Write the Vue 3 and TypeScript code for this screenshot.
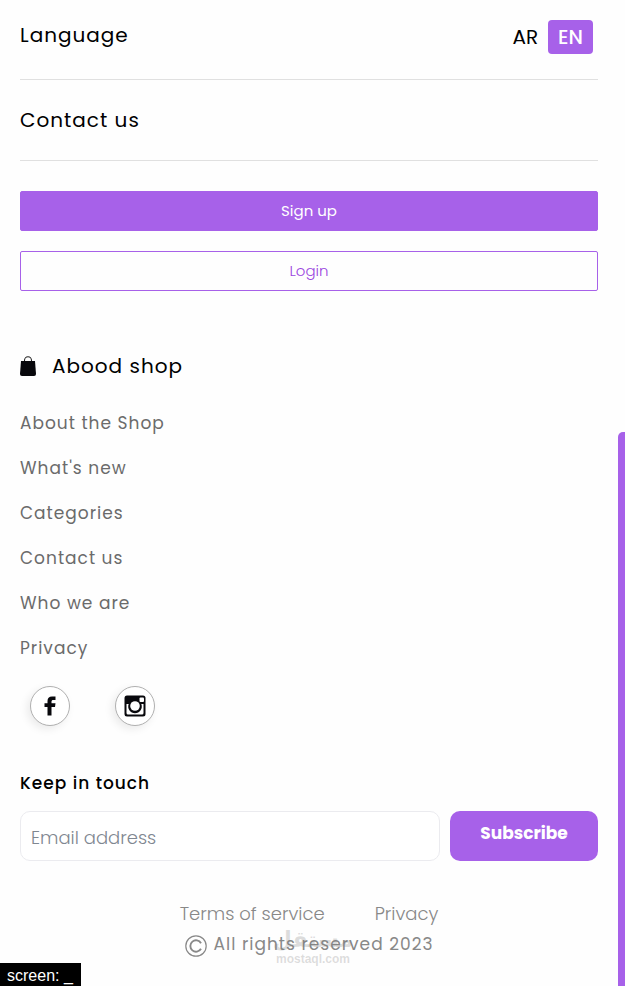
<script setup lang="ts">
import { ref } from 'vue'

type Lang = 'AR' | 'EN'

const languages: Lang[] = ['AR', 'EN']
const current = ref<Lang>('EN')
const email = ref('')
const links: string[] = ['About the Shop', "What's new", 'Categories', 'Contact us', 'Who we are', 'Privacy']
</script>

<template>
  <div class="page">
    <main class="content">
      <section class="row">
        <span class="label">Language</span>
        <div class="switch">
          <button
            v-for="lang in languages"
            :key="lang"
            type="button"
            class="lang"
            :class="{ active: lang === current }"
            @click="current = lang"
          >{{ lang }}</button>
        </div>
      </section>
      <section class="row">
        <a class="label" href="#contact">Contact us</a>
      </section>

      <div class="actions">
        <button type="button" class="action filled">Sign up</button>
        <button type="button" class="action outline">Login</button>
      </div>

      <footer>
        <h2 class="brand">
          <svg class="bag" viewBox="0 0 16 20" aria-hidden="true">
            <path d="M4.5 7V4.5a3.5 3.8 0 0 1 7 0V7" fill="none" stroke="#222" stroke-width="1.1" />
            <path d="M1 5h14l1 13q0 2-2 2H2q-2 0-2-2z" fill="#08080c" />
          </svg>
          <span>Abood shop</span>
        </h2>
        <nav class="links">
          <a v-for="link in links" :key="link" href="#">{{ link }}</a>
        </nav>
        <div class="social">
          <a href="#" aria-label="Facebook">
            <svg viewBox="0 0 24 24">
              <path d="M9.500 21.500v-8.500H6.500V9.300h3V7.200C9.500 4 11 2.500 14 2.500h3.500v3.600h-2.200c-1.300 0-1.800.5-1.800 1.700v1.500h4L17 13h-3.500v8.500z" fill="#08080c" />
            </svg>
          </a>
          <a href="#" aria-label="Instagram">
            <svg viewBox="0 0 24 24">
              <path d="M4 1.500h16q2.500 0 2.500 2.500v16q0 2.500-2.500 2.500H4q-2.500 0-2.500-2.500V4q0-2.500 2.500-2.500z" fill="#08080c" />
              <path d="M3.500 10h2.200a6.800 6.800 0 1 0 12.600 0h2.200v9q0 1.500-1.500 1.500H5q-1.500 0-1.500-1.500z" fill="#fff" />
              <circle cx="12" cy="12" r="4.800" fill="#fff" />
              <rect x="16.500" y="3.500" width="4.500" height="4.500" rx="1" fill="#fff" />
            </svg>
          </a>
        </div>

        <form class="newsletter" @submit.prevent>
          <label for="email">Keep in touch</label>
          <div class="fields">
            <input id="email" v-model="email" type="email" placeholder="Email address" />
            <button type="submit">Subscribe</button>
          </div>
        </form>

        <div class="legal">
          <div class="terms">
            <a href="#">Terms of service</a>
            <a href="#">Privacy</a>
          </div>
          <p class="rights">
            <svg viewBox="0 0 22 22" aria-hidden="true" fill="none" stroke="#888">
              <circle cx="11" cy="11" r="10.200" stroke-width="1.200" />
              <path d="M16 8.200a5.700 5.700 0 1 0 0 5.600" stroke-width="1.900" />
            </svg>
            <span>All rights reserved 2023</span>
          </p>
          <div class="mark">
            <span class="mark-name" lang="ar">مستقل</span>
            <span class="mark-site">mostaql.com</span>
          </div>
        </div>
      </footer>
    </main>
    <div class="rail"><div class="thumb"></div></div>
    <div class="status">screen: _</div>
  </div>
</template>

<style>
body {
  margin: 0;
  background: #fefefe;
}
</style>

<style scoped>
.page {
  box-sizing: border-box;
  display: flex;
  min-height: 100vh;
  color: #000;
  font-family: Poppins, Inter, "Liberation Sans", sans-serif;
}
.page *, .page *::before { box-sizing: border-box; }
button, input { font-family: inherit; margin: 0; }
button { cursor: pointer; }
a { color: inherit; text-decoration: none; }

.content {
  flex: 1;
  min-width: 0;
  padding: 0 20px 24px;
}
.row {
  display: flex;
  justify-content: space-between;
  align-items: flex-start;
  height: 81px;
  padding: 25px 5px 0 0;
  border-bottom: 1px solid #e0e0e0;
}
.row:first-child {
  height: 80px;
  padding-top: 20px;
}
.label {
  font-size: 20px;
  line-height: 30px;
  letter-spacing: 1px;
}
.switch { display: flex; }
.lang {
  height: 34px;
  padding: 0 10px;
  border: 0;
  border-radius: 4px;
  background: transparent;
  color: #000;
  font-size: 20px;
  font-weight: 400;
}
.lang.active {
  background: #a761e9;
  color: #fff;
  font-weight: 500;
}

.actions {
  display: flex;
  flex-direction: column;
  gap: 20px;
  padding-top: 30px;
}
.action {
  height: 40px;
  padding: 0 0 2px;
  border: 1px solid #a761e9;
  border-radius: 2px;
  font-size: 15px;
}
.filled { background: #a761e9; color: #fff; }
.outline { background: transparent; color: #9a45e0; font-weight: 300; }

.brand {
  display: flex;
  align-items: center;
  gap: 16px;
  margin: 60px 0 0;
  font-size: 20px;
  font-weight: 400;
  line-height: 30px;
  letter-spacing: 1px;
}
.bag { width: 16px; height: 20px; }
.links {
  display: flex;
  flex-direction: column;
  align-items: flex-start;
  gap: 15px;
  padding-top: 27px;
  color: #6b6b6b;
  font-size: 17px;
  line-height: 30px;
  letter-spacing: 1px;
}
.social {
  display: flex;
  gap: 45px;
  padding: 23px 10px 0;
}
.social a {
  display: flex;
  align-items: center;
  justify-content: center;
  width: 40px;
  height: 40px;
  border: 1px solid #b0b0b0;
  border-radius: 50%;
  background: #fff;
  box-shadow: -3px 3px 8px rgba(0, 0, 0, 0.08);
}
.social svg { width: 24px; height: 24px; }

.newsletter { padding-top: 42px; }
.newsletter label {
  display: block;
  font-size: 17px;
  font-weight: 500;
  line-height: 30px;
  letter-spacing: 1px;
}
.fields {
  display: flex;
  gap: 10px;
  padding-top: 13px;
}
.fields input {
  flex: 1;
  min-width: 0;
  height: 50px;
  padding: 2px 10px 0;
  border: 1px solid #ebebef;
  border-radius: 10px;
  background: #fff;
  color: #222;
  font-size: 18px;
  font-weight: 300;
  outline: 0;
}
.fields input::placeholder { color: #7f8791; opacity: 1; }
.fields button {
  width: 148px;
  height: 50px;
  padding: 0 0 6px;
  border: 0;
  border-radius: 10px;
  background: #a761e9;
  color: #fff;
  font-size: 17px;
  font-weight: 700;
}

.legal {
  position: relative;
  padding-top: 38px;
  color: #888;
  font-weight: 300;
  line-height: 30px;
}
.terms {
  display: flex;
  justify-content: center;
  gap: 50px;
  font-size: 18px;
}
.rights {
  display: flex;
  justify-content: center;
  align-items: center;
  gap: 7px;
  margin: 0;
  font-size: 17px;
  font-weight: 400;
  letter-spacing: 1px;
}
.rights svg { width: 22px; height: 22px; margin-top: 4px; }
.mark {
  position: absolute;
  top: 66px;
  left: 50%;
  display: flex;
  flex-direction: column;
  align-items: center;
  width: 80px;
  margin-left: -36px;
  color: rgba(120, 120, 120, 0.25);
  font-weight: 700;
  pointer-events: none;
}
.mark-name {
  font-family: "DejaVu Sans", sans-serif;
  font-size: 22px;
  line-height: 26px;
}
.mark-site {
  font-family: "Liberation Sans", sans-serif;
  font-size: 12px;
  line-height: 12px;
}

.rail {
  display: flex;
  flex-direction: column;
  justify-content: flex-end;
  width: 7px;
}
.thumb {
  flex: 0 0 56.2%;
  border-radius: 5px 0 0 0;
  background: #a761e9;
}
.status {
  position: fixed;
  bottom: 0;
  left: 0;
  padding: 3px 8px 0 7px;
  background: #000;
  color: #fff;
  font-family: "Liberation Sans", sans-serif;
  font-size: 16px;
  line-height: 20px;
}
</style>
